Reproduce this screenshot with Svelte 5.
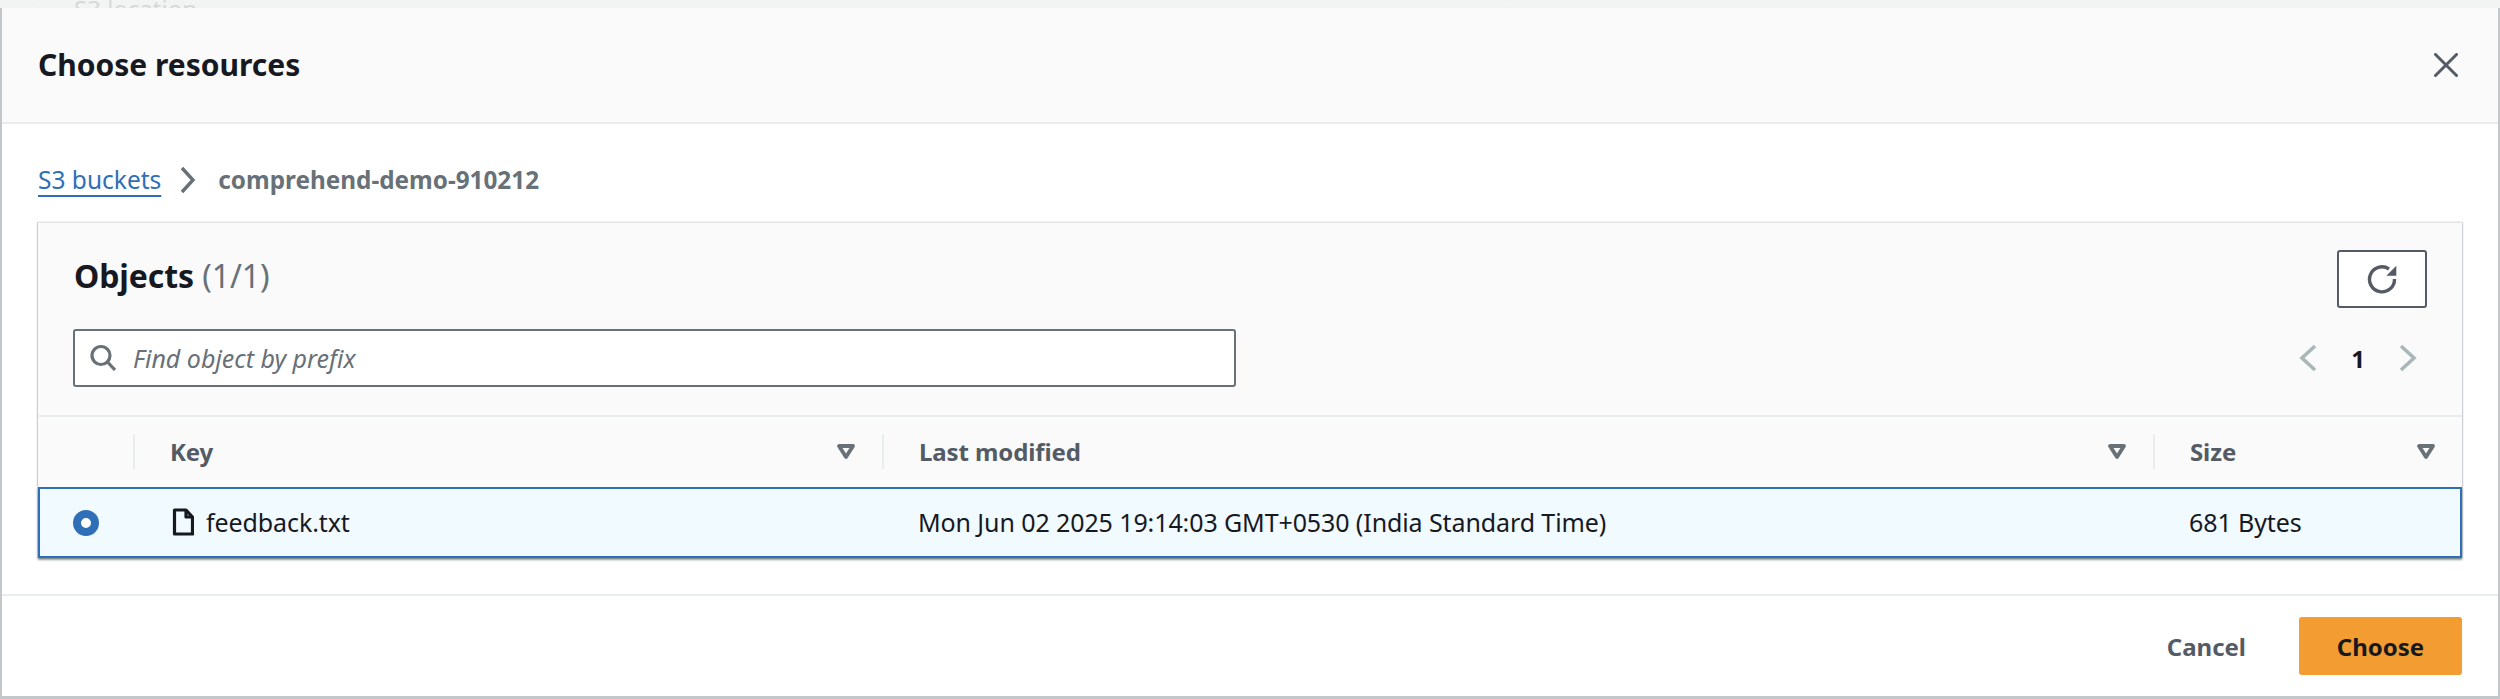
<script>
  const cols = ['Key', 'Last modified', 'Size'];
</script>

<div class="page">
  <div class="backdrop"><div class="ghostbox"><span class="ghost">S3 location</span></div></div>
  <div class="modal">
    <header class="head">
      <h2>Choose resources</h2>
      <svg class="close" viewBox="0 0 24 24" width="24" height="24"><path d="M1.5 1.5 22.5 22.5M22.5 1.5 1.5 22.5" /></svg>
    </header>
    <div class="body">
      <nav class="crumbs">
        <a href="#top">S3 buckets</a>
        <svg class="crumbchev" viewBox="0 0 16 28" width="16" height="28"><path d="M2 2 13 14 2 26" /></svg>
        <span class="current">comprehend-demo-910212</span>
      </nav>
      <section class="panel">
        <div class="tools">
          <div class="toolrow top">
            <h3>Objects <span class="count">(1/1)</span></h3>
            <button class="refresh" aria-label="Refresh">
              <svg viewBox="0 0 30 30" width="30" height="30"><path class="stroke" d="M22 5A12.500 12.500 0 1 0 27.500 15" /><path class="solid" d="M29.300 1.700V11.700H19.300Z" /></svg>
            </button>
          </div>
          <div class="toolrow bottom">
            <label class="search">
              <svg viewBox="0 0 28 28" width="28" height="28"><circle cx="12" cy="11.500" r="9" /><path d="M18.500 18 26 26" /></svg>
              <input placeholder="Find object by prefix" />
            </label>
            <div class="pager">
              <svg viewBox="0 0 18 28" width="18" height="28"><path d="M16 2 3 14 16 26" /></svg>
              <span>1</span>
              <svg viewBox="0 0 18 28" width="18" height="28"><path d="M2 2 15 14 2 26" /></svg>
            </div>
          </div>
        </div>
        <div class="thead">
          <div class="th first"></div>
          {#each cols as c, i}
            <div class="th">
              <span class="sep"></span>
              <span class="label">{c}</span>
              <svg class="sort" viewBox="0 0 18 15" width="18" height="15"><path d="M2 2H16L9 13Z" /></svg>
            </div>
          {/each}
        </div>
        <div class="row">
          <div class="cell first"><span class="radio"></span></div>
          <div class="cell key">
            <svg viewBox="0 0 22 28" width="22" height="28"><path d="M2.500 2H14L20.500 9V26H2.500ZM14 2V9H20.500" /></svg>
            <span>feedback.txt</span>
          </div>
          <div class="cell">Mon Jun 02 2025 19:14:03 GMT+0530 (India Standard Time)</div>
          <div class="cell">681 Bytes</div>
        </div>
      </section>
    </div>
    <footer class="foot">
      <button class="cancel">Cancel</button>
      <button class="choose">Choose</button>
    </footer>
  </div>
</div>

<style>
  :global(body) { margin: 0; background: #f2f3f3; }
  .page {
    width: 2500px; height: 699px; overflow: hidden;
    font-family: "Noto Sans", "Open Sans", sans-serif;
    color: #16191f; background: #c4c7c9;
    display: flex; flex-direction: column;
  }
  .backdrop { height: 8px; background: #f2f3f3; overflow: hidden; flex: none; padding-left: 37px; }
  .ghostbox { width: 1434px; height: 8px; border-left: 1px solid #e6e8e8; border-right: 1px solid #e6e8e8; padding-left: 36px; }
  .ghost { display: block; margin-top: -7px; font-size: 24px; line-height: 32px; color: #d5d9d9; }
  .modal { margin: 0 2px 3px; flex: 1; background: #fff; display: flex; flex-direction: column; min-height: 0; }
  .head {
    height: 116px; box-sizing: border-box; background: #fafafa; border-bottom: 2px solid #eaeded;
    display: flex; align-items: center; justify-content: space-between; padding: 0 40px 0 36px; flex: none;
  }
  h2 { margin: 0; font-size: 30px; line-height: 36px; font-weight: 700; }
  .close path { fill: none; stroke: #545b64; stroke-width: 3; stroke-linecap: round; }
  .body { flex: 1; padding: 0 36px; display: flex; flex-direction: column; }
  .crumbs { height: 98px; display: flex; align-items: center; padding-top: 13px; box-sizing: border-box; flex: none; }
  .crumbs a { font-size: 24.5px; color: #2f6fb8; text-decoration: underline; text-decoration-thickness: 2px; text-underline-offset: 6px; }
  .crumbchev { margin: 0 22px 0 19px; }
  .crumbchev path { fill: none; stroke: #687078; stroke-width: 3.4; }
  .current { font-size: 24.300px; font-weight: 700; color: #687078; }
  .panel {
    height: 336px; box-sizing: border-box; background: #fafafa;
    border-top: 1px solid #e4e6e6; box-shadow: 0 1px 2px rgba(0,28,36,.3), 1px 0 1px rgba(0,28,36,.12), -1px 0 1px rgba(0,28,36,.12);
    display: flex; flex-direction: column; flex: none;
  }
  .tools { height: 194px; box-sizing: border-box; padding: 27px 35px 0 35px; border-bottom: 2px solid #eaeded; flex: none; }
  .toolrow { display: flex; justify-content: space-between; }
  .top { height: 58px; align-items: flex-start; }
  .bottom { margin-top: 21px; align-items: center; }
  h3 { margin: 6px 0 0 1px; font-size: 32px; line-height: 40px; font-weight: 700; letter-spacing: -0.1px; }
  .count { font-weight: 400; color: #687078; }
  .refresh {
    width: 90px; height: 58px; box-sizing: border-box; border: 2px solid #545b64; border-radius: 3px; background: #fff;
    display: flex; align-items: center; justify-content: center; padding: 0;
  }
  .stroke { fill: none; stroke: #545b64; stroke-width: 3.4; }
  .solid { fill: #545b64; stroke: none; }
  .search {
    width: 1163px; height: 58px; box-sizing: border-box; border: 2px solid #687078; border-radius: 3px; background: #fff;
    display: flex; align-items: center; padding-left: 14px;
  }
  .search svg { fill: none; stroke: #687078; stroke-width: 3.2; flex: none; }
  input {
    flex: 1; border: 0; outline: 0; background: transparent; margin-left: 16px; padding: 0;
    font-family: inherit; font-size: 25px; font-style: italic;
  }
  input::placeholder { color: #687078; opacity: 1; }
  .pager { display: flex; align-items: center; margin-right: 10px; font-size: 24px; font-weight: 700; }
  .pager span { width: 82px; text-align: center; }
  .pager path { fill: none; stroke: #aab7b8; stroke-width: 3.6; }
  .thead, .row { display: grid; grid-template-columns: 95px 749px 1271px 1fr; }
  .thead { height: 70px; flex: none; }
  .th { position: relative; display: flex; align-items: center; justify-content: space-between; padding: 0 27px 2px 37px; }
  .th .sep { position: absolute; left: 0; top: 17px; bottom: 18px; width: 2px; background: #eaeded; }
  .label { font-size: 24px; font-weight: 700; color: #545b64; letter-spacing: -0.1px; }
  .sort path { fill: none; stroke: #687078; stroke-width: 3.8; stroke-linejoin: round; }
  .row {
    height: 71px; box-sizing: border-box; flex: none; background: #f1faff; font-size: 25px; letter-spacing: -0.1px;
    box-shadow: inset 0 0 0 2px #2f6fb8, 0 2px 2px rgba(0,28,36,.35);
  }
  .cell { display: flex; align-items: center; padding: 0 0 1px 36px; }
  .cell.first { padding: 0 0 0 35px; }
  .radio { width: 10px; height: 10px; border: 8px solid #2f6fb8; border-radius: 50%; background: #fff; }
  .cell.key { gap: 12px; padding-left: 39px; }
  .key svg { fill: none; stroke: #16191f; stroke-width: 3.2; stroke-linejoin: round; }
  .foot { flex: none; height: 102px; box-sizing: border-box; border-top: 2px solid #eaeded; display: flex; align-items: center; justify-content: flex-end; padding: 0 36px 0 0; gap: 53px; }
  button { font-family: inherit; cursor: pointer; }
  .cancel { border: 0; background: none; padding: 0; font-size: 24px; font-weight: 700; color: #545b64; }
  .choose { width: 163px; height: 58px; border: 0; border-radius: 3px; background: #f39c32; font-size: 24px; font-weight: 700; color: #16191f; padding: 0; }
</style>
